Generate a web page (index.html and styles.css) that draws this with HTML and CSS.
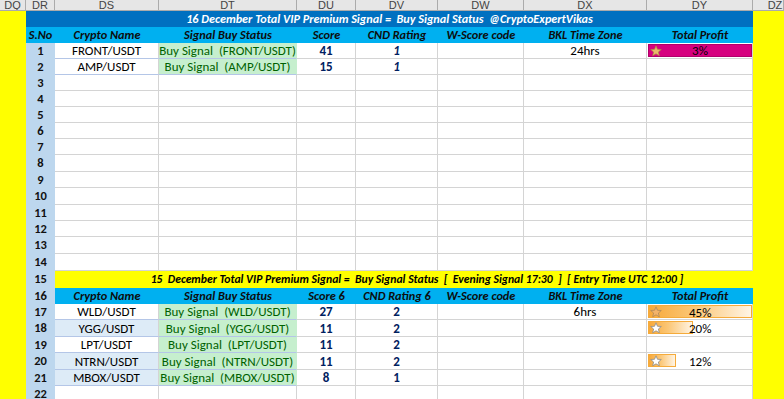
FILE: index.html
```html
<!DOCTYPE html>
<html>
<head>
<meta charset="utf-8">
<link rel="stylesheet" href="styles.css">
</head>
<body>
<div class="sheet">
  <!-- column letters -->
  <div class="ch">DQ</div><div class="ch">DR</div><div class="ch">DS</div><div class="ch">DT</div><div class="ch">DU</div><div class="ch">DV</div><div class="ch">DW</div><div class="ch">DX</div><div class="ch">DY</div><div class="ch ch-last">DZ</div>

  <div class="side side-left"></div>
  <div class="side side-right"></div>

  <!-- section 1 title -->
  <div class="title1">16 December Total VIP Premium Signal =  Buy Signal Status  @CryptoExpertVikas</div>

  <!-- section 1 header -->
  <div class="hd hd-sno">S.No</div>
  <div class="hd">Crypto Name</div>
  <div class="hd">Signal Buy Status</div>
  <div class="hd">Score</div>
  <div class="hd">CND Rating</div>
  <div class="hd">W-Score code</div>
  <div class="hd">BKL Time Zone</div>
  <div class="hd">Total Profit</div>

  <!-- row 1 -->
  <div class="rn">1</div>
  <div class="c c-name">FRONT/USDT</div>
  <div class="c c-sig">Buy Signal  (FRONT/USDT)</div>
  <div class="c c-score">41</div>
  <div class="c c-cnd it">1</div>
  <div class="c"></div>
  <div class="c">24hrs</div>
  <div class="c c-bar"><div class="bar bar-mag"><svg class="star" viewBox="0 0 12 12"><polygon points="6,0.8 7.5,4.3 11.3,4.5 8.4,7 9.3,10.8 6,8.8 2.7,10.8 3.6,7 0.7,4.5 4.5,4.3" fill="#E8B96A" stroke="#A88440" stroke-width="0.7"/></svg><span class="pct">3%</span></div></div>

  <!-- row 2 -->
  <div class="rn">2</div>
  <div class="c c-name">AMP/USDT</div>
  <div class="c c-sig">Buy Signal  (AMP/USDT)</div>
  <div class="c c-score">15</div>
  <div class="c c-cnd it">1</div>
  <div class="c"></div>
  <div class="c"></div>
  <div class="c"></div>

  <!-- rows 3..14 -->
  <div class="rn">3</div><div class="c"></div><div class="c"></div><div class="c"></div><div class="c"></div><div class="c"></div><div class="c"></div><div class="c"></div>
  <div class="rn">4</div><div class="c"></div><div class="c"></div><div class="c"></div><div class="c"></div><div class="c"></div><div class="c"></div><div class="c"></div>
  <div class="rn">5</div><div class="c"></div><div class="c"></div><div class="c"></div><div class="c"></div><div class="c"></div><div class="c"></div><div class="c"></div>
  <div class="rn">6</div><div class="c"></div><div class="c"></div><div class="c"></div><div class="c"></div><div class="c"></div><div class="c"></div><div class="c"></div>
  <div class="rn">7</div><div class="c"></div><div class="c"></div><div class="c"></div><div class="c"></div><div class="c"></div><div class="c"></div><div class="c"></div>
  <div class="rn">8</div><div class="c"></div><div class="c"></div><div class="c"></div><div class="c"></div><div class="c"></div><div class="c"></div><div class="c"></div>
  <div class="rn">9</div><div class="c"></div><div class="c"></div><div class="c"></div><div class="c"></div><div class="c"></div><div class="c"></div><div class="c"></div>
  <div class="rn">10</div><div class="c"></div><div class="c"></div><div class="c"></div><div class="c"></div><div class="c"></div><div class="c"></div><div class="c"></div>
  <div class="rn">11</div><div class="c"></div><div class="c"></div><div class="c"></div><div class="c"></div><div class="c"></div><div class="c"></div><div class="c"></div>
  <div class="rn">12</div><div class="c"></div><div class="c"></div><div class="c"></div><div class="c"></div><div class="c"></div><div class="c"></div><div class="c"></div>
  <div class="rn">13</div><div class="c"></div><div class="c"></div><div class="c"></div><div class="c"></div><div class="c"></div><div class="c"></div><div class="c"></div>
  <div class="rn">14</div><div class="c"></div><div class="c"></div><div class="c"></div><div class="c"></div><div class="c"></div><div class="c"></div><div class="c"></div>

  <!-- row 15: section 2 title -->
  <div class="rn">15</div>
  <div class="title2">15  December Total VIP Premium Signal =  Buy Signal Status  [  Evening Signal 17:30  ]  [ Entry Time UTC 12:00 ]</div>

  <!-- row 16: section 2 header -->
  <div class="rn">16</div>
  <div class="hd">Crypto Name</div>
  <div class="hd">Signal Buy Status</div>
  <div class="hd">Score 6</div>
  <div class="hd">CND Rating 6</div>
  <div class="hd">W-Score code</div>
  <div class="hd">BKL Time Zone</div>
  <div class="hd">Total Profit</div>

  <!-- row 17 -->
  <div class="rn">17</div>
  <div class="c c-name">WLD/USDT</div>
  <div class="c c-sig">Buy Signal  (WLD/USDT)</div>
  <div class="c c-score">27</div>
  <div class="c c-score">2</div>
  <div class="c"></div>
  <div class="c">6hrs</div>
  <div class="c c-bar"><div class="bar bar-org" style="width:104px"><svg class="star" viewBox="0 0 12 12"><polygon points="6,0.8 7.5,4.3 11.3,4.5 8.4,7 9.3,10.8 6,8.8 2.7,10.8 3.6,7 0.7,4.5 4.5,4.3" fill="#F2B36A" stroke="#A8845A" stroke-width="0.7"/></svg></div><span class="pct pct-abs">45%</span></div>

  <!-- row 18 -->
  <div class="rn">18</div>
  <div class="c c-name alt">YGG/USDT</div>
  <div class="c c-sig">Buy Signal  (YGG/USDT)</div>
  <div class="c c-score">11</div>
  <div class="c c-score">2</div>
  <div class="c"></div>
  <div class="c"></div>
  <div class="c c-bar"><div class="bar bar-org" style="width:45px"><svg class="star" viewBox="0 0 12 12"><polygon points="6,0.8 7.5,4.3 11.3,4.5 8.4,7 9.3,10.8 6,8.8 2.7,10.8 3.6,7 0.7,4.5 4.5,4.3" fill="#FFFFFF" stroke="#8C8C8C" stroke-width="0.8"/></svg></div><span class="pct pct-abs">20%</span></div>

  <!-- row 19 -->
  <div class="rn">19</div>
  <div class="c c-name">LPT/USDT</div>
  <div class="c c-sig">Buy Signal  (LPT/USDT)</div>
  <div class="c c-score">11</div>
  <div class="c c-score">2</div>
  <div class="c"></div>
  <div class="c"></div>
  <div class="c"></div>

  <!-- row 20 -->
  <div class="rn">20</div>
  <div class="c c-name alt">NTRN/USDT</div>
  <div class="c c-sig">Buy Signal  (NTRN/USDT)</div>
  <div class="c c-score">11</div>
  <div class="c c-score">2</div>
  <div class="c"></div>
  <div class="c"></div>
  <div class="c c-bar"><div class="bar bar-org" style="width:28px"><svg class="star" viewBox="0 0 12 12"><polygon points="6,0.8 7.5,4.3 11.3,4.5 8.4,7 9.3,10.8 6,8.8 2.7,10.8 3.6,7 0.7,4.5 4.5,4.3" fill="#FFFFFF" stroke="#8C8C8C" stroke-width="0.8"/></svg></div><span class="pct pct-abs">12%</span></div>

  <!-- row 21 -->
  <div class="rn">21</div>
  <div class="c c-name alt">MBOX/USDT</div>
  <div class="c c-sig">Buy Signal  (MBOX/USDT)</div>
  <div class="c c-score">8</div>
  <div class="c c-score">1</div>
  <div class="c"></div>
  <div class="c"></div>
  <div class="c"></div>

  <!-- row 22 -->
  <div class="rn rn-last">22</div><div class="c"></div><div class="c"></div><div class="c"></div><div class="c"></div><div class="c"></div><div class="c"></div><div class="c"></div>
</div>
</body>
</html>
```

FILE: styles.css
```css
html, body {
  margin: 0;
  padding: 0;
  background: #ffffff;
  overflow: hidden;
}

.sheet {
  display: grid;
  grid-template-columns: 26px 29px 104px 138px 59px 82px 86px 123px 106px 31px;
  grid-template-rows: 11px 16px 16px 16px 16px 16px 16px 16px 16px 16px 17px 16px 17px 16px 16px 17px 17px 17px 16px 16px 17px 16px 17px 16px 16px;
  width: 784px;
  height: 399px;
  overflow: hidden;
  font-family: Carlito, Lato, "Open Sans", sans-serif;
  font-size: 12px;
  color: #000;
}

.sheet > div {
  box-sizing: border-box;
  min-width: 0;
  white-space: pre;
  overflow: hidden;
  display: flex;
  align-items: center;
  justify-content: center;
  line-height: 1;
}

/* column letters */
.ch {
  background: #e6e6e6;
  color: #444;
  font-family: "Liberation Sans", Arial, sans-serif;
  font-size: 11px;
  border-right: 1px solid #ababab;
  border-bottom: 1px solid #ababab;
  padding-top: 1px;
}
.ch-last { justify-content: flex-start; padding-left: 14px; }

.side {
  background: #ffff00;
  grid-row: 2 / -1;
}
.side-left { grid-column: 1; }
.side-right { grid-column: 10; }

.title1 {
  grid-column: 2 / 10;
  background: #0070c0;
  color: #ffffff;
  font-weight: bold;
  font-style: italic;
  font-size: 12.2px;
}

.title2 {
  grid-column: 3 / 10;
  background: #ffff00;
  color: #000;
  font-weight: bold;
  font-style: italic;
  font-size: 11.7px;
  padding-left: 26px;
}

.hd {
  background: #00b0f0;
  color: #0d0d0d;
  font-weight: bold;
  font-style: italic;
  font-size: 12.3px;
}

.rn {
  background: #bdd7ee;
  color: #111;
  font-weight: bold;
  font-size: 12.5px;
}
.sheet > .rn-last {
  align-items: flex-start;
  padding-top: 2px;
}

.c {
  background: #ffffff;
  border-right: 1px solid #d4d4d4;
  border-bottom: 1px solid #d4d4d4;
  font-size: 13px;
}

.c-name { border-bottom-color: #b4c6e7; }
.c-name.alt { background: #ddebf7; }

.c-sig {
  background: #c6efce;
  color: #006100;
  border-right-color: #c6efce;
  border-bottom-color: #b4c6e7;
}

.c-score {
  color: #002060;
  font-weight: bold;
}

.c-cnd {
  color: #002060;
  font-weight: bold;
}
.it { font-style: italic; }

.c-bar {
  position: relative;
  justify-content: flex-start !important;
  align-items: flex-start !important;
  padding: 1px 0 0 1px;
}

.bar {
  box-sizing: border-box;
  height: 13px;
  display: flex;
  align-items: center;
  position: relative;
}
.bar-mag {
  width: 104px;
  background: #d6007f;
  border: 1px solid #b0006a;
  justify-content: center;
}
.bar-org {
  background: linear-gradient(to right, #f8a93a 0%, #fbc777 45%, #fff4e4 100%);
  border: 1px solid #f5ab3b;
}

.star {
  width: 12px;
  height: 12px;
  position: absolute;
  left: 1px;
  top: -0.5px;
}

.pct {
  color: #000;
  font-size: 13px;
}
.pct-abs {
  position: absolute;
  left: 42px;
  top: 2px;
}
```
